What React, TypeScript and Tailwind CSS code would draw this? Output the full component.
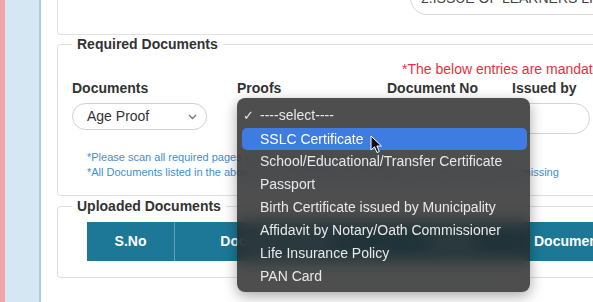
import React from "react";

const items = [
  "School/Educational/Transfer Certificate",
  "Passport",
  "Birth Certificate issued by Municipality",
  "Affidavit by Notary/Oath Commissioner",
  "Life Insurance Policy",
  "PAN Card",
];

export default function App() {
  return (
    <div className="relative flex w-[593px] h-[302px] overflow-hidden bg-white font-['Liberation_Sans',Arial,sans-serif]">
      <div className="w-[5px] shrink-0 bg-[#f3a3aa]" />
      <div className="w-[36px] shrink-0 bg-[#d4e7f3] border-r-2 border-[#a9cde3]" />
      <div className="flex-1 min-w-0 overflow-hidden pl-[16px]">
        <div className="w-[700px] flex flex-col">
          {/* top box */}
          <div className="flex h-[35px] border-l border-b border-[#e2e2e2] rounded-bl-[4px]">
            <div className="ml-[352px] -mt-[19px] h-[34px] w-[320px] shrink-0 rounded-full border border-[#d8d8d8] flex items-center px-[10px] text-[14px] text-[#444]">
              2.ISSUE OF LEARNERS LICENCE
            </div>
          </div>

          {/* Required Documents */}
          <fieldset className="mt-[1px] border border-[#dedede] rounded-[4px] pl-[14px] pb-[15px]">
            <legend className="px-[5px] text-[14px] leading-[16px] font-bold text-[#333]">
              Required Documents
            </legend>
            <div className="mt-[9px] ml-[330px] text-[14px] leading-[16px] text-[#e5323e] whitespace-nowrap">
              *The below entries are mandatory
            </div>
            <div className="mt-[3px] grid grid-cols-[165px_150px_125px_100px] text-[14px] leading-[16px] font-bold text-[#333]">
              <div>Documents</div>
              <div>Proofs</div>
              <div>Document No</div>
              <div>Issued by</div>
            </div>
            <div className="mt-[7px] grid grid-cols-[165px_150px_125px_100px] items-start">
              <div className="w-[135px] h-[27px] rounded-full border border-[#cfcfcf] flex items-center justify-between pl-[14px] pr-[9px] text-[14px] text-[#333]">
                <span>Age Proof</span>
                <svg width="9" height="6" viewBox="0 0 9 6">
                  <polyline points="1,1 4.5,4.5 8,1" fill="none" stroke="#777" strokeWidth="1.3" />
                </svg>
              </div>
              <div />
              <div />
              <div className="w-[78px] h-[31px] rounded-full border border-[#d4d4d4]" />
            </div>
            <div className="mt-[16px] ml-[15px] text-[11px] leading-[15px] text-[#3d8fd2] whitespace-nowrap">
              <div>*Please scan all required pages of the documents and upload</div>
              <div>*All Documents listed in the above list are mandatory, else application shall be treated as missing</div>
            </div>
          </fieldset>

          {/* Uploaded Documents */}
          <fieldset className="mt-[2px] border border-[#dedede] rounded-[4px] pl-[14px] pb-[16px]">
            <legend className="px-[5px] text-[14px] leading-[16px] font-bold text-[#333]">
              Uploaded Documents
            </legend>
            <div className="mt-[8px] ml-[15px] flex h-[39px] bg-[#1c7896] text-white text-[14px] font-bold">
              <div className="w-[88px] flex items-center justify-center border-r border-[#5aa4bc]">S.No</div>
              <div className="w-[202px] flex items-center justify-center border-r border-[#5aa4bc]">Document Name</div>
              <div className="w-[150px] flex items-center justify-center border-r border-[#5aa4bc]">Proofs</div>
              <div className="w-[100px] flex items-center pl-[7px] border-r border-[#5aa4bc]">Document No</div>
            </div>
          </fieldset>
        </div>
      </div>

      {/* dropdown menu */}
      <div className="absolute left-[237px] top-[98px] w-[293px] h-[194px] rounded-[8px] bg-[rgba(34,34,34,0.8)] backdrop-blur-sm shadow-[0_4px_14px_rgba(0,0,0,0.35)] pt-[6px] text-[14px] leading-[23px] text-[#e8e8e8]">
        <div className="relative h-[23px] pl-[23px]">
          <span className="absolute left-[6px] top-0 text-[13px]">✓</span>
          ----select----
        </div>
        <div className="relative h-[23px] flex items-center">
          <div className="ml-[5px] mr-[3px] flex-1 h-[22px] rounded-[5px] bg-[#3e7ce2] pl-[18px] leading-[22px] text-white">
            SSLC Certificate
          </div>
          <svg className="absolute left-[133px] top-[8px]" width="13" height="19" viewBox="0 0 13 19">
            <path d="M1 1 L1 15 L4.5 11.8 L7 17.5 L9.3 16.5 L6.9 11 L11.5 11 Z" fill="#111" stroke="#fff" strokeWidth="1" strokeLinejoin="round" />
          </svg>
        </div>
        {items.map((t) => (
          <div key={t} className="h-[23px] pl-[23px] whitespace-nowrap">
            {t}
          </div>
        ))}
      </div>
    </div>
  );
}
